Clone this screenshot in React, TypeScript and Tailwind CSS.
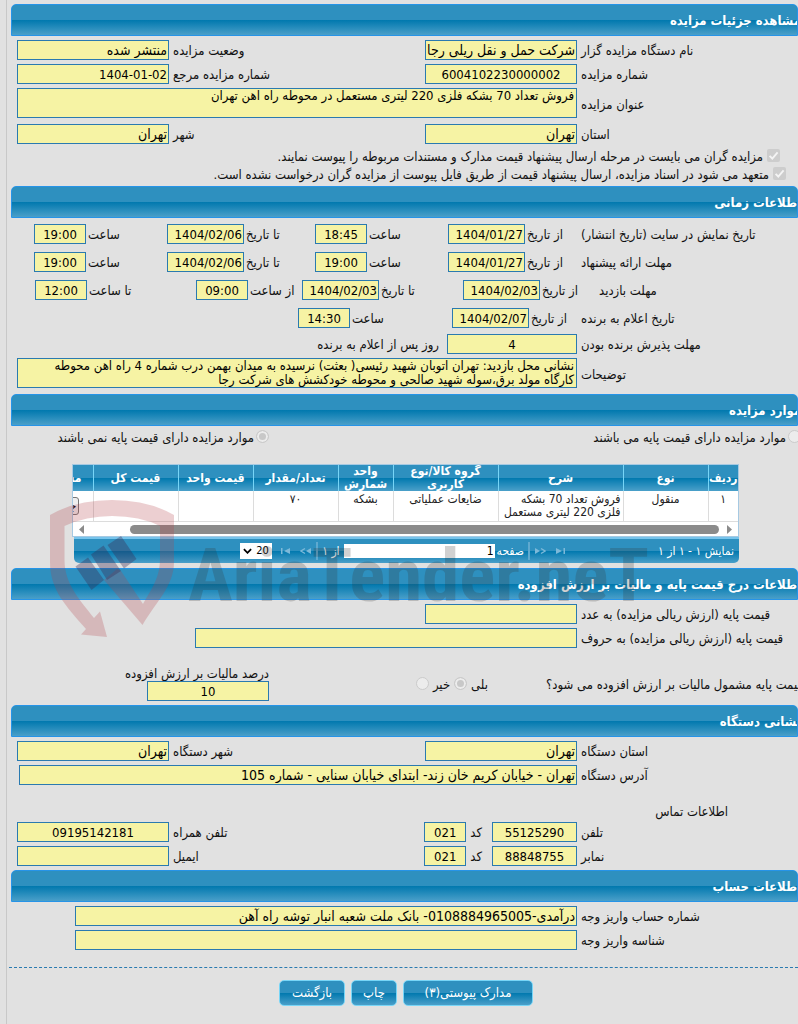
import React, { useId } from "react";

const FIELD =
  "block h-5 shrink-0 border border-[#2a7ab0] bg-[#f6f3a4] px-px py-0 leading-[18px] text-black outline-none";
const BAR_FILL =
  "bg-[linear-gradient(180deg,#2e90bf_0%,#2e90bf_50%,#0078ae_50%,#4a9fc9_100%)]";

function Bar({ title }: { title: string }) {
  return (
    <h2
      className={`flex h-8 items-center overflow-hidden rounded-t-[5px] border border-[#2694e8] pt-0.5 text-[13px] font-bold whitespace-nowrap text-white ${BAR_FILL}`}
    >
      <span className="-mr-1">{title}</span>
    </h2>
  );
}

type FieldProps = {
  label: string;
  value?: string;
  width: string;
  align?: string;
  size?: string;
  first?: boolean;
  gap?: string;
};

function Field({
  label,
  value = "",
  width,
  align = "text-right",
  size = "text-[13px]",
  first = false,
  gap = "gap-1",
}: FieldProps) {
  const id = useId();
  return (
    <div className={`flex items-center ${gap}`}>
      <label
        htmlFor={id}
        className={`shrink-0 whitespace-nowrap pt-0.5 ${first ? "w-[217px] text-left" : ""}`}
      >
        {label}
      </label>
      <input id={id} readOnly defaultValue={value} className={`${FIELD} ${width} ${align} ${size}`} />
    </div>
  );
}

function Area({ label, value }: { label: string; value: string }) {
  const id = useId();
  return (
    <div className="flex items-center gap-1 pl-1.5">
      <label htmlFor={id} className="w-[217px] shrink-0 pt-1 text-left">
        {label}
      </label>
      <textarea
        id={id}
        readOnly
        rows={2}
        defaultValue={value}
        className="block h-[30px] min-w-0 flex-1 resize-none overflow-hidden border border-[#2a7ab0] bg-[#f6f3a4] py-0 pr-0.5 pl-4 text-[13px] leading-[14px] text-black outline-none"
      />
    </div>
  );
}

function Pair({ children }: { children: React.ReactNode }) {
  return <div className="flex h-5 items-center justify-between pl-1.5">{children}</div>;
}

function Slot({ width, children }: { width: string; children: React.ReactNode }) {
  return <div className={`flex shrink-0 justify-end ${width}`}>{children}</div>;
}

function TimeRow({ label, labelWidth, children }: { label: string; labelWidth: string; children: React.ReactNode }) {
  return (
    <div className="flex h-5 items-center">
      <span className={`shrink-0 pt-0.5 text-left whitespace-nowrap ${labelWidth}`}>{label}</span>
      {children}
    </div>
  );
}

function Tick({ label }: { label: string }) {
  return (
    <label className="flex h-[18px] items-center gap-1 whitespace-nowrap">
      <span className="relative h-[13px] w-[13px] shrink-0">
        <input
          type="checkbox"
          checked
          disabled
          readOnly
          className="block h-[13px] w-[13px] appearance-none rounded-xs bg-[#cdcdcd]"
        />
        <svg viewBox="0 0 13 13" className="pointer-events-none absolute inset-0 h-[13px] w-[13px]">
          <path d="M2.6 6.8 5.3 9.5 10.6 3.4" fill="none" stroke="#f4f4f4" strokeWidth="1.9" />
        </svg>
      </span>
      <span className="pt-1">{label}</span>
    </label>
  );
}

function Radio({ checked = false, name, id }: { checked?: boolean; name: string; id: string }) {
  return (
    <input
      type="radio"
      id={id}
      name={name}
      defaultChecked={checked}
      disabled
      className="block h-[13px] w-[13px] shrink-0 appearance-none rounded-full border border-[#cbcbcb] bg-[#ececec] checked:bg-[#c8c8c8] checked:shadow-[inset_0_0_0_2px_#ececec]"
    />
  );
}

const COLUMNS: { title: string; width: string; cell: React.ReactNode; align?: string }[] = [
  { title: "ردیف", width: "w-[30px]", cell: "۱" },
  { title: "نوع", width: "w-[85px]", cell: "منقول" },
  { title: "شرح", width: "w-[125px]", cell: "فروش تعداد 70 بشکه فلزی 220 لیتری مستعمل", align: "text-right" },
  { title: "گروه کالا/نوع کاربری", width: "w-[105px]", cell: "ضایعات عملیاتی" },
  { title: "واحد شمارش", width: "w-[55px]", cell: "بشکه" },
  { title: "تعداد/مقدار", width: "w-[85px]", cell: "۷۰" },
  { title: "قیمت واحد", width: "w-[75px]", cell: "" },
  { title: "قیمت کل", width: "w-[85px]", cell: "" },
  {
    title: "مشاهده",
    width: "w-[65px]",
    cell: (
      <button
        type="button"
        className="mt-1 mr-3 block h-[18px] rounded-[3px] border border-[#767676] bg-[#efefef] px-px text-[12px] leading-4 text-black"
      >
        جزئیات
      </button>
    ),
  },
];

function ItemsGrid() {
  return (
    <div className="mr-[59px] w-[667px] text-[12px]">
      <div className="overflow-hidden border border-[#a6c9e2] bg-white">
        <table className="w-[710px] table-fixed border-collapse">
          <thead>
            <tr className="h-[26px]">
              {COLUMNS.map((c) => (
                <th
                  key={c.title}
                  className={`overflow-hidden border-l border-[#77d5f7] p-0 text-center text-[12px] leading-[13px] font-bold text-white ${BAR_FILL} ${c.width}`}
                >
                  {c.title}
                </th>
              ))}
            </tr>
          </thead>
          <tbody>
            <tr className="h-[30px] align-top">
              {COLUMNS.map((c) => (
                <td
                  key={c.title}
                  className={`overflow-hidden border-b border-l border-[#dcdcdc] px-0.5 py-0.5 leading-[13px] text-[#222222] ${c.align ?? "text-center"}`}
                >
                  {c.cell}
                </td>
              ))}
            </tr>
          </tbody>
        </table>
        <div className="flex h-[14px] items-center justify-between px-1.5">
          <svg viewBox="0 0 5 9" className="h-[9px] w-[5px]">
            <path d="M0 0 5 4.500 0 9Z" fill="#8b8b8b" />
          </svg>
          <span className="mr-2 ml-auto h-[9px] w-[589px] rounded-full bg-[#8b8b8b]" />
          <svg viewBox="0 0 5 9" className="h-[9px] w-[5px]">
            <path d="M5 0 0 4.500 5 9Z" fill="#8b8b8b" />
          </svg>
        </div>
      </div>
      <div
        className={`ml-0.5 flex h-[26px] items-center rounded-b-[5px] border-t-2 border-[#77c4ec] pr-[5px] whitespace-nowrap text-white ${BAR_FILL}`}
      >
        <span className="w-[164px]">نمایش ۱ - ۱ از ۱</span>
        <PagerIcon last forward />
        <PagerIcon forward />
        <span className="h-[18px] border-r-2 border-[#5fa9cf]" />
        <label className="mr-1 flex items-center gap-0.5">
          صفحه
          <input
            readOnly
            defaultValue="1"
            className="block h-[14px] w-[151px] bg-white px-px py-0 text-right text-[12px] leading-[14px] text-black"
          />
        </label>
        <span className="mr-1">از ۱</span>
        <span className="mr-1 h-[18px] border-r-2 border-[#5fa9cf]" />
        <PagerIcon />
        <PagerIcon last />
        <span className="relative mr-1 h-4 w-8">
          <select
            aria-label="تعداد در صفحه"
            dir="ltr"
            className="block h-4 w-8 appearance-none bg-white pl-4 text-[11px] leading-4 text-black"
          >
            <option>20</option>
          </select>
          <svg viewBox="0 0 10 6" className="pointer-events-none absolute top-[5px] left-[3px] h-[6px] w-[9px]">
            <path d="M1 1 5 5 9 1" fill="none" stroke="#000" strokeWidth="2" />
          </svg>
        </span>
      </div>
    </div>
  );
}

function PagerIcon({ last = false, forward = false }: { last?: boolean; forward?: boolean }) {
  return (
    <button type="button" className="mx-1 block h-2.5 w-3" aria-label={last ? "صفحه پایانی" : "صفحه کناری"}>
      <svg viewBox="0 0 12 10" className={`h-2.5 w-3 ${forward ? "-scale-x-100" : ""}`}>
        {last ? (
          <path d="M1 2h1.500v6h-1.500ZM10 2v6L4 5Z" fill="#7db9d9" />
        ) : (
          <>
            <path d="M5 2.500 1 5 5 7.500" fill="none" stroke="#7db9d9" strokeWidth="1.300" />
            <path d="M11 2v6L6 5Z" fill="#7db9d9" />
          </>
        )}
      </svg>
    </button>
  );
}

function Watermark() {
  return (
    <div aria-hidden="true" className="pointer-events-none absolute top-[496px] left-[50px] h-[150px] w-[620px]">
      <svg viewBox="50 496 620 150" className="h-[150px] w-[620px]" direction="ltr">
        <path
          fill="#b44149"
          opacity="0.25"
          fillRule="evenodd"
          d="M50 515Q76 500 112 500Q148 500 174 515V562C174 586 156 602 142.500 625L104 580L117 569L121 571L143 604C152 588 160 578 160 558V526Q140 516 112 516Q86 516 64.500 526V560C64.500 584 80 600 94 618L100 611.500L107 637L81 634.500L86 629C66 606 50 590 50 562Z"
        />
        <g fill="#3a2850" opacity="0.35">
          <path d="M75.500 566.500 88 557.500 104 580 91.500 590Z" />
          <path d="M91 554.500 103.500 545.500 121 571 107 580Z" />
          <path d="M107.500 545 121 536 136.500 559 124 568.500Z" />
        </g>
        <text
          x="188"
          y="601"
          fontFamily="'Roboto Condensed', 'Liberation Sans', sans-serif"
          fontWeight="700"
          fontSize="75"
          fill="#333333"
          opacity="0.22"
        >
          AriaTender.neT
        </text>
      </svg>
    </div>
  );
}

const ACTION = `h-[26px] rounded-[5px] border border-[#77d5f7] text-[13px] leading-6 text-white ${BAR_FILL}`;

function DateSlot({ width, label, value }: { width: string; label: string; value: string }) {
  return (
    <Slot width={width}>
      <Field gap="gap-0.5" label={label} value={value} width="w-[77px]" />
    </Slot>
  );
}

function HourSlot({ width, label, value }: { width: string; label: string; value: string }) {
  return (
    <Slot width={width}>
      <Field gap="gap-0.5" label={label} value={value} width="w-[52px]" align="text-center" />
    </Slot>
  );
}

export default function App() {
  return (
    <div
      dir="rtl"
      className="relative min-h-screen overflow-hidden bg-[#e1e1e1] pl-1.5 font-['DejaVu_Sans_Condensed','DejaVu_Sans',sans-serif] text-[13px] leading-4 text-[#111111]"
    >
      <main className="min-h-screen border-l border-[#c8c8c8] pt-1 pl-1">
        <section>
          <Bar title="مشاهده جزئیات مزایده" />
          <div className="flex flex-col gap-1 pt-1">
            <Pair>
              <Field first size="text-[14px]" label="نام دستگاه مزایده گزار" value="شرکت حمل و نقل ریلی رجا" width="w-[152px]" />
              <Field size="text-[14px]" label="وضعیت مزایده" value="منتشر شده" width="w-[152px]" />
            </Pair>
            <Pair>
              <Field first label="شماره مزایده" value="6004102230000002" width="w-[152px]" align="text-center" />
              <Field label="شماره مزایده مرجع" value="1404-01-02" width="w-[152px]" />
            </Pair>
            <Area label="عنوان مزایده" value="فروش تعداد 70 بشکه فلزی 220 لیتری مستعمل در محوطه راه آهن تهران" />
          </div>
          <div className="pt-1.5">
            <Pair>
              <Field first size="text-[14px]" label="استان" value="تهران" width="w-[152px]" />
              <Field size="text-[14px]" label="شهر" value="تهران" width="w-[152px]" />
            </Pair>
          </div>
          <div className="pt-0.5 pb-1">
            <div className="pr-[18px]">
              <Tick label="مزایده گران می بایست در مرحله ارسال پیشنهاد قیمت مدارک و مستندات مربوطه را پیوست نمایند." />
            </div>
            <div className="pr-3">
              <Tick label="متعهد می شود در اسناد مزایده، ارسال پیشنهاد قیمت از طریق فایل پیوست از مزایده گران درخواست نشده است." />
            </div>
          </div>
        </section>

        <section>
          <Bar title="اطلاعات زمانی" />
          <div className="flex flex-col gap-2 pt-1.5">
            <TimeRow label="تاریخ نمایش در سایت (تاریخ انتشار)" labelWidth="w-[217px]">
              <DateSlot width="w-[133px]" label="از تاریخ" value="1404/01/27" />
              <HourSlot width="w-[133px]" label="ساعت" value="18:45" />
              <DateSlot width="w-[148px]" label="تا تاریخ" value="1404/02/06" />
              <HourSlot width="w-[133px]" label="ساعت" value="19:00" />
            </TimeRow>
            <TimeRow label="مهلت ارائه پیشنهاد" labelWidth="w-[217px]">
              <DateSlot width="w-[133px]" label="از تاریخ" value="1404/01/27" />
              <HourSlot width="w-[133px]" label="ساعت" value="19:00" />
              <DateSlot width="w-[148px]" label="تا تاریخ" value="1404/02/06" />
              <HourSlot width="w-[133px]" label="ساعت" value="19:00" />
            </TimeRow>
            <TimeRow label="مهلت بازدید" labelWidth="w-[199px]">
              <DateSlot width="w-[136px]" label="از تاریخ" value="1404/02/03" />
              <DateSlot width="w-[161px]" label="تا تاریخ" value="1404/02/03" />
              <HourSlot width="w-[106px]" label="از ساعت" value="09:00" />
              <HourSlot width="w-[161px]" label="تا ساعت" value="12:00" />
            </TimeRow>
            <TimeRow label="تاریخ اعلام به برنده" labelWidth="w-[217px]">
              <DateSlot width="w-[129px]" label="از تاریخ" value="1404/02/07" />
              <HourSlot width="w-[154px]" label="ساعت" value="14:30" />
            </TimeRow>
          </div>
          <div className="mt-1.5 flex h-5 items-center gap-2">
            <Field first label="مهلت پذیرش برنده بودن" value="4" width="w-[130px]" align="text-center" />
            <span className="pt-0.5">روز پس از اعلام به برنده</span>
          </div>
          <div className="pt-1 pb-1.5">
            <Area
              label="توضیحات"
              value="نشانی محل بازدید: تهران اتوبان شهید رئیسی( بعثت) نرسیده به میدان بهمن درب شماره 4 راه آهن محوطه کارگاه مولد برق،سوله شهید صالحی و محوطه خودکشش های شرکت رجا"
            />
          </div>
        </section>

        <section>
          <Bar title="موارد مزایده" />
          <div className="flex h-[38px] items-start justify-between">
            <div className="-mr-[3px] flex items-center gap-0.5">
              <Radio id="base-yes" name="base" />
              <label htmlFor="base-yes" className="pt-1">موارد مزایده دارای قیمت پایه می باشند</label>
            </div>
            <div className="flex w-[258px] items-center gap-0.5">
              <Radio id="base-no" name="base" checked />
              <label htmlFor="base-no" className="pt-1 whitespace-nowrap">موارد مزایده دارای قیمت پایه نمی باشند</label>
            </div>
          </div>
          <ItemsGrid />
        </section>

        <section className="pt-[5px]">
          <Bar title="اطلاعات درج قیمت پایه و مالیات بر ارزش افزوده" />
          <div className="flex flex-col gap-1 pt-1">
            <Field first label="قیمت پایه (ارزش ریالی مزایده) به عدد" width="w-[152px]" />
            <Field first label="قیمت پایه (ارزش ریالی مزایده) به حروف" width="w-[382px]" />
          </div>
          <div className="flex h-[57px] items-end pb-1">
            <span className="-mr-1 w-[256px] shrink-0 pb-2 text-left whitespace-nowrap">
              <span className="float-left">قیمت پایه مشمول مالیات بر ارزش افزوده می شود؟</span>
            </span>
            <span className="mr-[58px] flex items-center gap-1 pb-2">
              <label htmlFor="vat-yes" className="pt-1">بلی</label>
              <Radio id="vat-yes" name="vat" checked />
              <label htmlFor="vat-no" className="pt-1">خیر</label>
              <Radio id="vat-no" name="vat" />
            </span>
            <span className="mr-auto flex w-[258px] flex-col items-start">
              <label htmlFor="vat-rate" className="h-[15px] whitespace-nowrap">درصد مالیات بر ارزش افزوده</label>
              <input id="vat-rate" readOnly defaultValue="10" className={`${FIELD} w-[122px] text-center text-[13px]`} />
            </span>
          </div>
        </section>

        <section>
          <Bar title="نشانی دستگاه" />
          <div className="flex flex-col gap-1 pt-1">
            <Pair>
              <Field first size="text-[14px]" label="استان دستگاه" value="تهران" width="w-[152px]" />
              <Field size="text-[14px]" label="شهر دستگاه" value="تهران" width="w-[152px]" />
            </Pair>
            <Field
              first
              size="text-[14px]"
              label="آدرس دستگاه"
              value="تهران - خیابان کریم خان زند- ابتدای خیابان سنایی - شماره 105"
              width="w-[558px]"
            />
          </div>
          <h3 className="flex h-[37px] items-end pr-[70px] pb-0.5">اطلاعات تماس</h3>
          <div className="flex flex-col gap-1">
            <Pair>
              <div className="flex items-center gap-2.5">
                <Field first label="تلفن" value="55125290" width="w-[85px]" align="text-center" />
                <Field label="کد" value="021" width="w-[42px]" align="text-center" />
              </div>
              <Field label="تلفن همراه" value="09195142181" width="w-[152px]" align="text-center" />
            </Pair>
            <Pair>
              <div className="flex items-center gap-2.5">
                <Field first label="نمابر" value="88848755" width="w-[85px]" align="text-center" />
                <Field label="کد" value="021" width="w-[42px]" align="text-center" />
              </div>
              <Field label="ایمیل" width="w-[152px]" />
            </Pair>
          </div>
        </section>

        <section className="pt-1">
          <Bar title="اطلاعات حساب" />
          <div className="flex flex-col gap-1 pt-1">
            <Field
              first
              size="text-[14px]"
              label="شماره حساب واریز وجه"
              value="درآمدی-0108884965005- بانک ملت شعبه انبار توشه راه آهن"
              width="w-[502px]"
            />
            <Field first label="شناسه واریز وجه" width="w-[502px]" />
          </div>
        </section>

        <div className="mt-[17px] -ml-0.5 border-t border-dashed border-[#2a7ab0]" />
        <div className="mt-3 flex justify-start gap-1.5 pr-[265px]">
          <button type="button" className={`${ACTION} w-[130px]`}>مدارک پیوستی(۳)</button>
          <button type="button" className={`${ACTION} w-[46px]`}>چاپ</button>
          <button type="button" className={`${ACTION} w-[66px]`}>بازگشت</button>
        </div>
      </main>
      <Watermark />
    </div>
  );
}
